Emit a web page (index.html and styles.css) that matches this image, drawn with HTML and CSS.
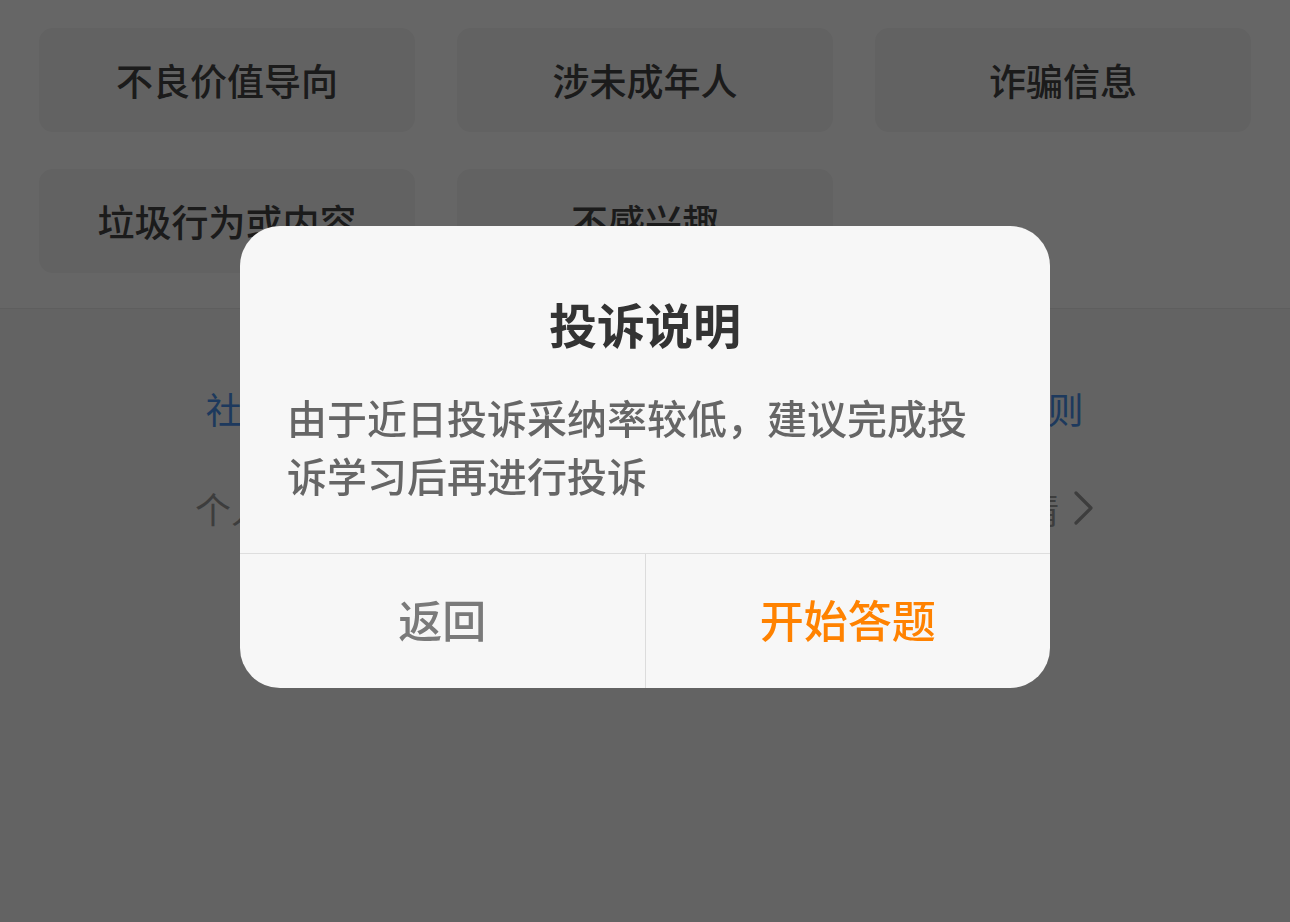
FILE: index.html
```html
<!DOCTYPE html>
<html lang="zh-CN">
<head>
<meta charset="utf-8">
<title>投诉说明</title>
<link rel="stylesheet" href="styles.css">
</head>
<body>
<div class="page">
  <section class="reasons">
    <div class="reason">不良价值导向</div>
    <div class="reason">涉未成年人</div>
    <div class="reason">诈骗信息</div>
    <div class="reason">垃圾行为或内容</div>
    <div class="reason">不感兴趣</div>
  </section>
  <section class="notes">
    <p class="rules">社区自律公约与用户行为规范、平台违规内容处理规则</p>
    <p class="more"><span>个人信息保护政策及投诉处理流程说明，点击查看详情</span>
      <svg class="chev" width="22" height="34" viewBox="0 0 22 34"><polyline points="3,2 18,17 3,32" fill="none" stroke="#999" stroke-width="3.2" stroke-linecap="round" stroke-linejoin="round"/></svg>
    </p>
  </section>
</div>
<div class="mask">
  <div class="dialog">
    <div class="dialog-body">
      <h2 class="dialog-title">投诉说明</h2>
      <p class="dialog-text">由于近日投诉采纳率较低，建议完成投诉学习后再进行投诉</p>
    </div>
    <div class="dialog-actions">
      <div class="action action-back">返回</div>
      <div class="action action-start">开始答题</div>
    </div>
  </div>
</div>
</body>
</html>
```

FILE: styles.css
```css
* { box-sizing: border-box; }
html, body { margin: 0; padding: 0; height: 100%; }
body {
  font-family: "Noto Sans CJK SC", "Noto Sans", sans-serif;
  background: #f7f7f7;
  overflow: hidden;
}
.page {
  display: flex;
  flex-direction: column;
  height: 922px;
}
.reasons {
  background: #fff;
  display: grid;
  grid-template-columns: repeat(3, 1fr);
  column-gap: 42px;
  row-gap: 37px;
  padding: 28px 39px 35px;
  border-bottom: 1px solid #ececec;
}
.reason {
  height: 104px;
  border-radius: 14px;
  background: #f5f5f5;
  display: flex;
  align-items: center;
  justify-content: center;
  font-size: 37px;
  font-weight: 500;
  color: #444;
}
.notes {
  flex: 1;
  background: #f7f7f7;
  display: flex;
  flex-direction: column;
  align-items: center;
  padding-top: 74px;
}
.rules {
  margin: 0;
  font-size: 36px;
  line-height: 50px;
  letter-spacing: 0.6px;
  color: #4a8fe8;
}
.more {
  margin: 50px 0 0;
  font-size: 36px;
  line-height: 50px;
  color: #999;
  display: flex;
  align-items: center;
  gap: 14px;
}
.chev { display: block; }
.mask {
  position: fixed;
  inset: 0;
  background: rgba(0, 0, 0, 0.6);
  display: flex;
  justify-content: center;
  align-items: flex-start;
  padding-top: 226px;
}
.dialog {
  width: 810px;
  background: #f7f7f7;
  border-radius: 40px;
  overflow: hidden;
}
.dialog-body {
  padding: 67px 47px 49px;
}
.dialog-title {
  margin: 0 0 35px;
  text-align: center;
  font-size: 48px;
  line-height: 60px;
  font-weight: 700;
  color: #333;
}
.dialog-text {
  margin: 0;
  font-size: 40px;
  line-height: 58px;
  font-weight: 500;
  color: #666;
}
.dialog-actions {
  display: flex;
  border-top: 1px solid #dedede;
  height: 135px;
}
.action {
  flex: 1;
  display: flex;
  align-items: center;
  justify-content: center;
  padding-bottom: 4px;
  font-size: 44px;
  font-weight: 500;
}
.action-back { color: #7a7a7a; }
.action-start { color: #ff8200; border-left: 1px solid #dcdcdc; }
```
